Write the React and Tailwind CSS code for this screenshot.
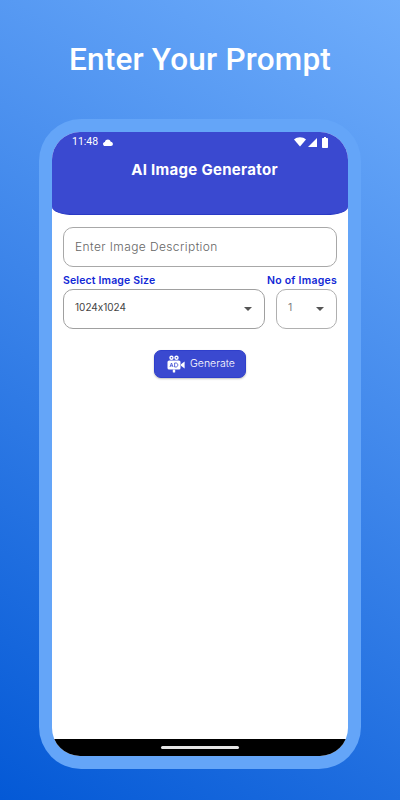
import React from "react";

function Caret() {
  return <span className="block w-0 h-0 border-l-[4.5px] border-r-[4.5px] border-t-[4.5px] border-l-transparent border-r-transparent border-t-[#555555]" />;
}

function AdCamera() {
  return (
    <svg width="18" height="18" viewBox="0 0 18 18" fill="#ffffff" aria-hidden="true">
      <circle cx="4.5" cy="2.8" r="2.2" />
      <circle cx="9.5" cy="2.8" r="2.2" />
      <circle cx="4.5" cy="2.8" r="0.8" fill="#3a49d0" />
      <circle cx="9.5" cy="2.8" r="0.8" fill="#3a49d0" />
      <rect x="0.5" y="5.5" width="13" height="9" rx="1.6" />
      <path d="M14 9.2 L17.6 6.6 V13.4 L14 10.8 Z" />
      <rect x="5.8" y="14.5" width="2.4" height="3" rx="0.6" />
      <path d="M3 12 L4.5 8 L6 12 M3.6 10.8 H5.4" fill="none" stroke="#3a49d0" strokeWidth="0.8" />
      <path d="M7.6 8 V12 H9 C11.4 12 11.4 8 9 8 Z" fill="none" stroke="#3a49d0" strokeWidth="0.8" />
    </svg>
  );
}

function StatusIcons() {
  return (
    <div className="flex items-center gap-[2px]">
      <svg width="12" height="10" viewBox="0 0 12 10" fill="#ffffff"><path d="M0 2.6 C3.4 -0.4 8.6 -0.4 12 2.6 L6 9.6 Z" /></svg>
      <svg width="9" height="9" viewBox="0 0 9 9" fill="#ffffff"><path d="M9 0 V9 H0 Z" /></svg>
      <svg width="6" height="11" viewBox="0 0 6 11" fill="#ffffff" className="ml-[3px]"><path d="M2 0 H4 V1 H5.2 Q6 1 6 1.8 V10.2 Q6 11 5.2 11 H0.8 Q0 11 0 10.2 V1.8 Q0 1 0.8 1 H2 Z" /></svg>
    </div>
  );
}

export default function App() {
  const mont = "font-['Inter','Liberation_Sans',sans-serif] [font-feature-settings:'calt'_0]";
  return (
    <div className="w-[400px] h-[800px] overflow-hidden flex flex-col items-center bg-[linear-gradient(32deg,#0459d6_0%,#3d85ea_52%,#6fadfb_100%)]">
      <h1 className="mt-[40px] h-[40px] leading-[40px] text-white text-[31.5px] font-medium font-['Roboto',sans-serif] tracking-[0.2px] whitespace-nowrap">Enter Your Prompt</h1>

      <div className="mt-[39px] w-[322px] h-[650px] p-[13px] rounded-[42px] bg-[#64a5f8]">
        <div className="w-full h-full rounded-[28px] overflow-hidden bg-white flex flex-col">
          <div className="h-[83px] shrink-0 bg-[#3a49d0] rounded-b-[22px_8px] border-b border-[#2a3ac4] px-[20px] pt-[2px]">
            <div className="h-[16px] flex items-center justify-between font-['Roboto',sans-serif] text-white text-[10.5px]">
              <div className="flex items-center gap-[5px]">
                <span>11:48</span>
                <svg width="10" height="7" viewBox="0 0 10 7" fill="#ffffff"><path d="M2.3 7 C-0.6 7 -0.7 3.2 1.9 2.9 C2.6 0 6.8 -0.4 7.7 2.7 C10.6 2.9 10.6 7 7.9 7 Z" /></svg>
              </div>
              <StatusIcons />
            </div>
            <div className={`mt-[10px] pl-[9px] text-center text-white text-[15px] font-bold leading-[20px] tracking-[0.3px] whitespace-nowrap ${mont}`}>AI Image Generator</div>
          </div>

          <div className="flex-1 px-[11px] pt-[12px] flex flex-col">
            <div className={`h-[40px] rounded-[10px] border border-[#a8a8a8] px-[11px] flex items-center text-[12px] font-light text-[#666666] tracking-[0.4px] ${mont}`}>Enter Image Description</div>

            <div className="mt-[6px] flex gap-[11px]">
              <div className="flex-1 flex flex-col">
                <div className={`h-[16px] leading-[16px] text-[10.5px] font-semibold text-[#1128d6] tracking-[0.15px] whitespace-nowrap ${mont}`}>Select Image Size</div>
                <div className={`h-[40px] rounded-[10px] border border-[#a0a0a0] pl-[11px] pr-[12px] flex items-center justify-between text-[10px] text-[#444444] ${mont}`}>
                  <span className="-mt-[3px]">1024x1024</span>
                  <Caret />
                </div>
              </div>
              <div className="w-[61px] flex flex-col items-end">
                <div className={`h-[16px] leading-[16px] text-[10.5px] font-semibold text-[#1128d6] tracking-[0.25px] whitespace-nowrap ${mont}`}>No of Images</div>
                <div className={`w-full h-[40px] rounded-[10px] border border-[#b0b0b0] pl-[11px] pr-[12px] flex items-center justify-between text-[10.5px] text-[#808080] ${mont}`}>
                  <span className="-mt-[3px]">1</span>
                  <Caret />
                </div>
              </div>
            </div>

            <div className="mt-[21px] flex justify-center">
              <div className={`w-[92px] h-[28px] rounded-[7px] bg-[#3a49d0] border border-[#2f3fcb] shadow-[0_1px_2px_rgba(0,0,0,0.25)] pl-[12px] flex items-center gap-[5px] text-white text-[10.5px] font-light ${mont}`}>
                <AdCamera />
                <span>Generate</span>
              </div>
            </div>
          </div>

          <div className="h-[17px] shrink-0 bg-black flex items-center justify-center">
            <div className="w-[78px] h-[3px] rounded-full bg-[#e6e6e6]" />
          </div>
        </div>
      </div>
    </div>
  );
}
